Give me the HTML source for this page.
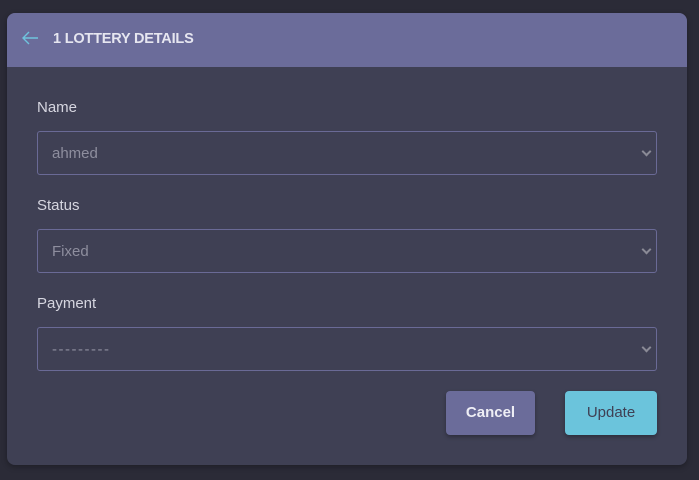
<!DOCTYPE html>
<html><head><style>
*{box-sizing:border-box;margin:0;padding:0}
body{width:699px;height:480px;background:#2b2b37;font-family:"Liberation Sans",sans-serif;position:relative;overflow:hidden}
.card{position:absolute;left:7px;top:13px;width:680px;height:452px;background:#3f4054;border-radius:8px;overflow:hidden;box-shadow:0 2px 6px rgba(0,0,0,.3)}
.hd{height:54px;background:#6b6c9a;position:relative}
.hd svg{position:absolute;left:14px;top:18px}
.hd span{position:absolute;left:46px;top:18px;color:#e6e6f0;font-weight:bold;font-size:14.5px;letter-spacing:-0.2px}
.lab{position:absolute;left:30px;color:#d6d6e0;font-size:15px}
.inp{position:absolute;left:30px;width:620px;height:44px;border:1px solid #6a6a96;border-radius:3px;color:#8e8e9e;font-size:15px;padding:13px 14px}
.inp:after{content:"";position:absolute;right:6px;top:16px;width:5px;height:5px;border-right:2px solid #8a8a96;border-bottom:2px solid #8a8a96;transform:rotate(45deg)}
.btn{position:absolute;top:378px;height:44px;border-radius:4px;font-size:15px;text-align:center;line-height:44px;box-shadow:0 2px 4px rgba(0,0,0,.3)}
</style></head><body>
<div class="card">
<div class="hd"><svg width="18" height="14" viewBox="0 0 18 14"><path d="M17 7H2M8 1L2 7l6 6" stroke="#6fc3dd" stroke-width="1.4" fill="none"/></svg><span>1 LOTTERY DETAILS</span></div>
<div class="lab" style="top:86px">Name</div>
<div class="inp" style="top:118px">ahmed</div>
<div class="lab" style="top:184px">Status</div>
<div class="inp" style="top:216px">Fixed</div>
<div class="lab" style="top:282px">Payment</div>
<div class="inp" style="top:314px;letter-spacing:1.5px">---------</div>
<div class="btn" style="left:439px;width:89px;background:#6b6c9a;color:#eeeef5;font-weight:bold">Cancel</div>
<div class="btn" style="left:558px;width:92px;background:#6bc4dc;color:#3f4054">Update</div>
</div>
</body></html>
